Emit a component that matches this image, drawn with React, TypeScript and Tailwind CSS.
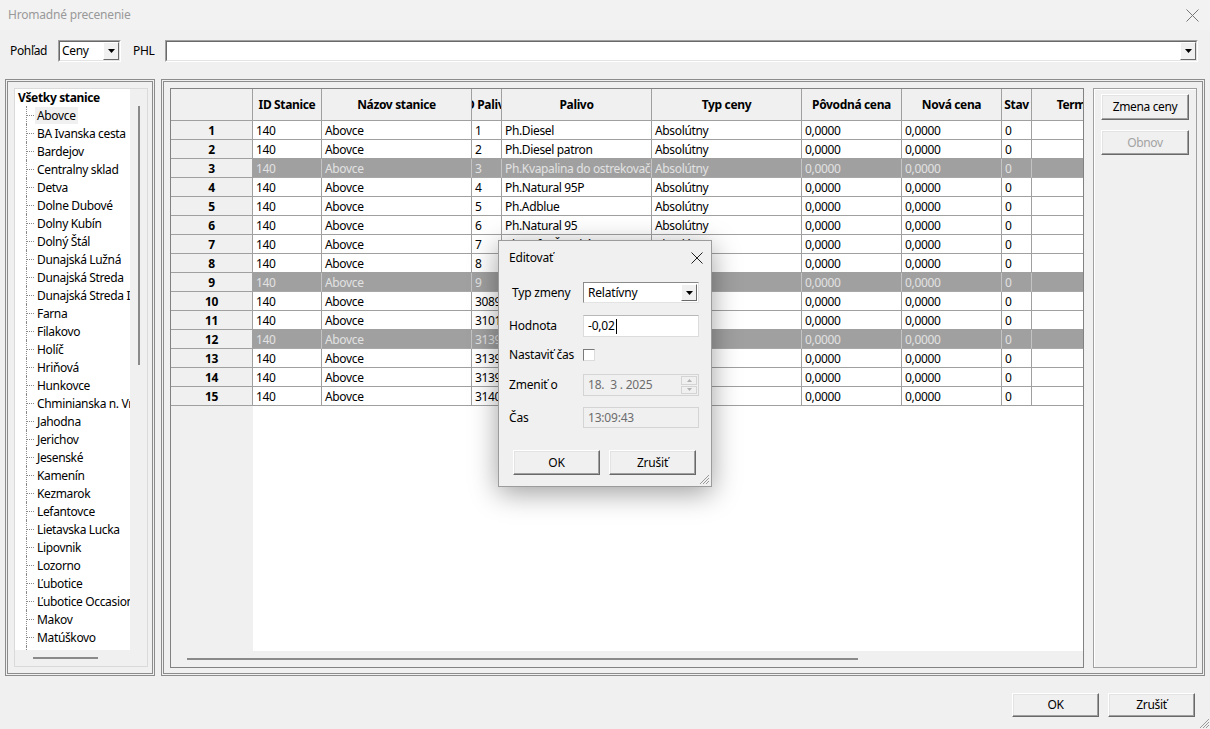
import React from "react";

const stations = [
  "Abovce",
  "BA Ivanska cesta",
  "Bardejov",
  "Centralny sklad",
  "Detva",
  "Dolne Dubové",
  "Dolny Kubín",
  "Dolný Štál",
  "Dunajská Lužná",
  "Dunajská Streda",
  "Dunajská Streda II",
  "Farna",
  "Filakovo",
  "Holíč",
  "Hriňová",
  "Hunkovce",
  "Chminianska n. Vranov",
  "Jahodna",
  "Jerichov",
  "Jesenské",
  "Kamenín",
  "Kezmarok",
  "Lefantovce",
  "Lietavska Lucka",
  "Lipovnik",
  "Lozorno",
  "Ľubotice",
  "Ľubotice  Occasion",
  "Makov",
  "Matúškovo",
  "Michalovce",
];

const cols = [
  { w: "w-[69px]", label: "ID Stanice" },
  { w: "w-[150px]", label: "Názov stanice" },
  { w: "w-[30px]", label: "ID Palivo" },
  { w: "w-[150px]", label: "Palivo" },
  { w: "w-[150px]", label: "Typ ceny" },
  { w: "w-[100px]", label: "Pôvodná cena" },
  { w: "w-[100px]", label: "Nová cena" },
  { w: "w-[30px]", label: "Stav" },
  { w: "w-[90px]", label: "Termín" },
];

const fuel: [string, string][] = [
  ["1", "Ph.Diesel"],
  ["2", "Ph.Diesel patron"],
  ["3", "Ph.Kvapalina do ostrekovačov"],
  ["4", "Ph.Natural 95P"],
  ["5", "Ph.Adblue"],
  ["6", "Ph.Natural 95"],
  ["7", "Ph.Nafta Ženská"],
  ["8", "Ph.LPG"],
  ["9", "Ph.Diesel plus"],
  ["30891", "Ph.Natural 98"],
  ["31011", "Ph.CNG"],
  ["31391", "Ph.Olej"],
  ["31392", "Ph.Olej 2"],
  ["31393", "Ph.Olej 3"],
  ["31401", "Ph.Plyn"],
];

const selected = [3, 9, 12];

function Combo({ text, wide }: { text: string; wide?: boolean }) {
  return (
    <div
      className={
        "h-[22px] border border-t-[#a0a0a0] border-l-[#a0a0a0] border-r-white border-b-white " +
        (wide ? "flex-1" : "w-[63px]")
      }
    >
      <div className="h-full flex bg-white border border-t-[#696969] border-l-[#696969] border-r-[#e3e3e3] border-b-[#e3e3e3]">
        <div className="flex-1 flex items-center pl-[2px] overflow-hidden whitespace-nowrap">{text}</div>
        <DropBtn />
      </div>
    </div>
  );
}

function DropBtn() {
  return (
    <div className="w-[16px] h-full flex items-center justify-center bg-[#f0f0f0] border border-t-white border-l-white border-r-[#696969] border-b-[#696969]">
      <svg width="7" height="4" viewBox="0 0 7 4">
        <path d="M0 0H7L3.5 4Z" fill="#000" />
      </svg>
    </div>
  );
}

function Btn({
  children,
  disabled,
  w,
  h,
}: {
  children: React.ReactNode;
  disabled?: boolean;
  w: string;
  h: string;
}) {
  return (
    <div
      className={
        "flex items-center justify-center bg-[#f0f0f0] border border-t-white border-l-white border-r-[#696969] border-b-[#696969] shadow-[inset_-1px_-1px_0_#a0a0a0,inset_1px_1px_0_#e3e3e3] " +
        w +
        " " +
        h +
        (disabled ? " text-[#a3a3a3]" : " text-black")
      }
    >
      {children}
    </div>
  );
}

function Grip() {
  return (
    <svg width="11" height="11" viewBox="0 0 11 11">
      <path d="M10 1L1 10M10 4L4 10M10 7L7 10" stroke="#9a9a9a" strokeWidth="1" />
    </svg>
  );
}

export default function App() {
  return (
    <div className="relative w-[1210px] h-[729px] overflow-hidden bg-[#f0f0f0] font-['Noto_Sans',sans-serif] text-[12px] tracking-[-0.35px] text-black flex flex-col">
      {/* Title bar */}
      <div className="h-[30px] shrink-0 bg-[#f2f2f2] flex items-center justify-between pl-[8px] pr-[11px]">
        <span className="text-[#999999] text-[12px] tracking-[-0.2px]">Hromadné precenenie</span>
        <svg width="13" height="13" viewBox="0 0 13 13">
          <path d="M0.5 0.5L12.5 12.5M12.5 0.5L0.5 12.5" stroke="#777" strokeWidth="1" />
        </svg>
      </div>

      {/* Toolbar */}
      <div className="mt-[10px] h-[22px] shrink-0 flex items-center pl-[10px] pr-[12px]">
        <span className="w-[48px]">Pohľad</span>
        <Combo text="Ceny" />
        <span className="ml-[12px] w-[32px]">PHL</span>
        <Combo text="" wide />
      </div>

      {/* Panels */}
      <div className="mt-[17px] h-[597px] shrink-0 flex px-[5px] gap-[6px]">
        {/* Left tree panel */}
        <div className="w-[150px] h-full border-[3px] border-double border-[#8c8c8c] flex pl-[6px] pr-[4px] pt-[6px] pb-[6px]">
          <div className="flex-1 flex flex-col border border-[#dadada] bg-[#f0f0f0]">
            <div className="flex h-[561px] shrink-0">
              <div className="w-[115px] bg-white overflow-hidden">
                <div className="h-[17px] flex items-center pl-[3px] font-bold whitespace-nowrap">Všetky stanice</div>
                {stations.map((s, i) => (
                  <div key={s} className="h-[18px] flex items-center whitespace-nowrap">
                    <div className="w-[11px] shrink-0" />
                    <div className="w-[9px] h-full shrink-0 border-l border-dotted border-[#8a8a8a] flex items-center">
                      <div className="w-[7px] border-t border-dotted border-[#8a8a8a]" />
                    </div>
                    <span className={i === 0 ? "px-[2px] bg-[#f0f0f0] leading-[17px]" : "px-[2px] leading-[17px]"}>{s}</span>
                  </div>
                ))}
              </div>
              <div className="w-[17px] flex justify-center pt-[17px]">
                <div className="w-[2px] h-[259px] bg-[#8a8a8a]" />
              </div>
            </div>
            <div className="h-[16px] flex items-center pl-[18px]">
              <div className="w-[65px] h-[2px] bg-[#8a8a8a]" />
            </div>
          </div>
        </div>

        {/* Main panel */}
        <div className="flex-1 h-full border-[3px] border-double border-[#8c8c8c] flex pl-[6px] pr-[5px] pt-[6px] pb-[5px]">
          {/* Grid */}
          <div className="w-[914px] h-full border border-[#828282] flex flex-col bg-[#f0f0f0]">
            <div className="h-[562px] shrink-0 overflow-hidden flex flex-col bg-white">
              {/* Header */}
              <div className="flex h-[32px] shrink-0">
                <div className="w-[82px] shrink-0 bg-[#f0f0f0] border-r border-b border-[#a0a0a0]" />
                {cols.map((c) => (
                  <div
                    key={c.label}
                    className={
                      c.w +
                      " shrink-0 bg-[#f0f0f0] border-r border-b border-[#a0a0a0] flex items-center justify-center overflow-hidden font-bold whitespace-nowrap pt-[1px]"
                    }
                  >
                    <span className="shrink-0">{c.label}</span>
                  </div>
                ))}
              </div>
              {/* Rows */}
              {fuel.map(([pid, pal], i) => {
                const n = i + 1;
                const sel = selected.includes(n);
                const vals = ["140", "Abovce", pid, pal, "Absolútny", "0,0000", "0,0000", "0", ""];
                return (
                  <div key={n} className="flex h-[19px] shrink-0">
                    <div className="w-[82px] shrink-0 bg-[#f0f0f0] border-r border-b border-[#a0a0a0] flex items-center justify-center font-bold pt-[1px]">
                      {n}
                    </div>
                    {cols.map((c, j) => (
                      <div
                        key={c.label}
                        className={
                          c.w +
                          " shrink-0 border-b flex items-center overflow-hidden whitespace-nowrap pl-[3px] pt-[1px] " +
                          (sel
                            ? "bg-[#a0a0a0] text-[#e2e2e2] border-r border-r-[#c4c4c4] border-b-[#a8a8a8]"
                            : "bg-white text-black border-r border-[#a0a0a0]")
                        }
                      >
                        {vals[j]}
                      </div>
                    ))}
                  </div>
                );
              })}
              <div className="flex-1 flex">
                <div className="w-[82px] bg-[#f0f0f0]" />
                <div className="flex-1 bg-white" />
              </div>
            </div>
            <div className="h-[16px] flex items-center pl-[16px]">
              <div className="w-[671px] h-[2px] bg-[#8a8a8a]" />
            </div>
          </div>

          {/* Right button panel */}
          <div className="ml-[9px] flex-1 h-full border border-[#a0a0a0] shadow-[inset_1px_1px_0_#ffffff] flex flex-col pl-[7px] pt-[5px] gap-[10px]">
            <Btn w="w-[88px]" h="h-[26px]">
              Zmena ceny
            </Btn>
            <Btn w="w-[88px]" h="h-[25px]" disabled>
              Obnov
            </Btn>
          </div>
        </div>
      </div>

      {/* Bottom buttons */}
      <div className="mt-[17px] flex justify-end gap-[9px] pr-[15px]">
        <Btn w="w-[87px]" h="h-[24px]">
          OK
        </Btn>
        <Btn w="w-[87px]" h="h-[24px]">
          Zrušiť
        </Btn>
      </div>
      <div className="absolute right-0 bottom-0">
        <Grip />
      </div>

      {/* Dialog */}
      <div className="absolute left-[498px] top-[240px] w-[214px] h-[247px] bg-[#f0f0f0] border border-[#9c9c9c] shadow-[0_6px_26px_rgba(0,0,0,0.38)] flex flex-col tracking-[-0.2px]">
        <div className="h-[33px] shrink-0 flex items-center justify-between pl-[10px] pr-[8px]">
          <span>Editovať</span>
          <svg width="12" height="12" viewBox="0 0 12 12">
            <path d="M0.5 0.5L11.5 11.5M11.5 0.5L0.5 11.5" stroke="#222" strokeWidth="1" />
          </svg>
        </div>
        <div className="pl-[10px] flex flex-col">
          <div className="mt-[8px] h-[21px] flex items-center">
            <span className="w-[74px] pl-[3px]">Typ zmeny</span>
            <div className="w-[116px] h-[21px] flex bg-white border border-t-[#8a8a8a] border-l-[#8a8a8a] border-r-[#e3e3e3] border-b-[#e3e3e3] p-[1px]">
              <div className="flex-1 flex items-center pl-[3px]">Relatívny</div>
              <DropBtn />
            </div>
          </div>
          <div className="mt-[12px] h-[22px] flex items-center">
            <span className="w-[74px]">Hodnota</span>
            <div className="w-[116px] h-[22px] flex items-center bg-white border border-[#dcdcdc] border-t-[#b8b8b8] pl-[4px]">
              <span>-0,02</span>
              <span className="ml-[1px] w-[1px] h-[15px] bg-black" />
            </div>
          </div>
          <div className="mt-[7px] h-[22px] flex items-center">
            <span className="w-[74px]">Nastaviť čas</span>
            <div className="w-[12px] h-[12px] bg-white border border-[#7a7a7a] border-r-[#dcdcdc] border-b-[#dcdcdc]" />
          </div>
          <div className="mt-[8px] h-[22px] flex items-center">
            <span className="w-[74px]">Zmeniť o</span>
            <div className="w-[116px] h-[22px] flex items-center border border-[#d4d4d4] pl-[4px] pr-[1px] text-[#6d6d6d]">
              <span className="flex-1 whitespace-pre">18.  3 . 2025</span>
              <div className="w-[16px] h-[18px] flex flex-col gap-[1px]">
                <div className="flex-1 flex items-center justify-center border border-[#d4d4d4]">
                  <svg width="5" height="3" viewBox="0 0 5 3">
                    <path d="M0 3H5L2.5 0Z" fill="#b0b0b0" />
                  </svg>
                </div>
                <div className="flex-1 flex items-center justify-center border border-[#d4d4d4]">
                  <svg width="5" height="3" viewBox="0 0 5 3">
                    <path d="M0 0H5L2.5 3Z" fill="#b0b0b0" />
                  </svg>
                </div>
              </div>
            </div>
          </div>
          <div className="mt-[11px] h-[21px] flex items-center">
            <span className="w-[74px]">Čas</span>
            <div className="w-[116px] h-[21px] flex items-center border border-[#d4d4d4] pl-[4px] text-[#6d6d6d]">13:09:43</div>
          </div>
          <div className="mt-[22px] flex pl-[4px] gap-[9px]">
            <Btn w="w-[87px]" h="h-[25px]">
              OK
            </Btn>
            <Btn w="w-[87px]" h="h-[25px]">
              Zrušiť
            </Btn>
          </div>
        </div>
        <div className="absolute right-[1px] bottom-[1px]">
          <Grip />
        </div>
      </div>
    </div>
  );
}
